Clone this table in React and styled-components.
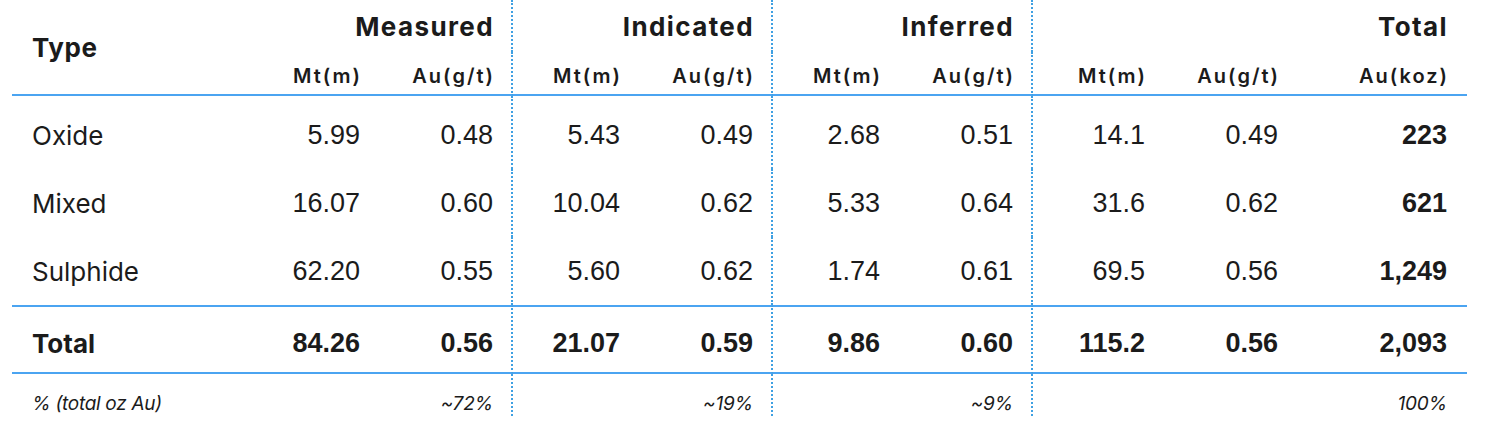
import React from 'react';
import styled, { createGlobalStyle } from 'styled-components';

const GlobalStyle = createGlobalStyle`
  body {
    margin: 0;
    background: #ffffff;
    color: #1b1b1b;
    font-family: "Inter", "Liberation Sans", sans-serif;
  }
`;

const BLUE = '#4ba4f1';
const DOTS = '#3fa0e2';

const Table = styled.table`
  margin-left: 12px;
  width: 1455px;
  table-layout: fixed;
  border-collapse: separate;
  border-spacing: 0;
`;

const Cell = styled.td`
  padding: 0 ${(p) => (p.$split ? '18px' : '20px')} 0 20px;
  text-align: ${(p) => (p.$left ? 'left' : 'right')};
  vertical-align: middle;
  white-space: nowrap;
  border-right: ${(p) => (p.$split ? `2px dotted ${DOTS}` : 'none')};
`;

const GroupHead = styled(Cell).attrs({ as: 'th' })`
  height: 52px;
  font-size: 26px;
  font-weight: 700;
  letter-spacing: 1.4px;
  padding-right: ${(p) => (p.$split ? '17px' : '19px')};
`;

const TypeHead = styled(GroupHead)`
  text-align: left;
  letter-spacing: 0.6px;
  border-bottom: 2px solid ${BLUE};
`;

const UnitHead = styled(Cell).attrs({ as: 'th' })`
  height: 44px;
  padding-top: 6px;
  padding-right: ${(p) => (p.$split ? '16px' : '18px')};
  box-sizing: border-box;
  font-size: 20px;
  font-weight: 600;
  letter-spacing: 2px;
  border-bottom: 2px solid ${BLUE};
`;

const BodyRow = styled.tr`
  td {
    height: 68px;
    box-sizing: border-box;
  }
  &:first-child td {
    height: 73px;
    padding-top: 5px;
  }
  &:last-child td {
    height: 65px;
    padding-top: 3px;
  }
`;

const Label = styled(Cell)`
  font-size: 26px;
  font-weight: ${(p) => (p.$bold ? 700 : 400)};
`;

const Num = styled(Cell)`
  font-family: "Liberation Sans", Arial, sans-serif;
  font-size: 27px;
  font-weight: ${(p) => (p.$bold ? 700 : 400)};
`;

const TotalRow = styled.tr`
  td {
    height: 69px;
    box-sizing: border-box;
    padding-top: 7px;
    border-top: 2px solid ${BLUE};
    border-bottom: 2px solid ${BLUE};
  }
`;

const NoteRow = styled.tr`
  td {
    height: 42px;
    box-sizing: border-box;
    padding-top: 18px;
    padding-bottom: 0;
    font-size: 19px;
    font-style: italic;
    line-height: 22px;
  }
`;

const Note = styled(Cell)`
  letter-spacing: ${(p) => (p.$left ? '-0.3px' : '-0.2px')};
`;

const widths = [241, 127, 133, 127, 133, 127, 133, 132, 133, 169];
const splits = [false, false, true, false, true, false, true, false, false, false];

const rows = [
  ['Oxide', '5.99', '0.48', '5.43', '0.49', '2.68', '0.51', '14.1', '0.49', '223'],
  ['Mixed', '16.07', '0.60', '10.04', '0.62', '5.33', '0.64', '31.6', '0.62', '621'],
  ['Sulphide', '62.20', '0.55', '5.60', '0.62', '1.74', '0.61', '69.5', '0.56', '1,249'],
];

const total = ['Total', '84.26', '0.56', '21.07', '0.59', '9.86', '0.60', '115.2', '0.56', '2,093'];
const note = ['% (total oz Au)', '', '~72%', '', '~19%', '', '~9%', '', '', '100%'];
const units = ['Mt(m)', 'Au(g/t)', 'Mt(m)', 'Au(g/t)', 'Mt(m)', 'Au(g/t)', 'Mt(m)', 'Au(g/t)', 'Au(koz)'];

export default function App() {
  return (
    <>
      <GlobalStyle />
      <Table>
        <colgroup>
          {widths.map((w, i) => (
            <col key={i} style={{ width: w }} />
          ))}
        </colgroup>
        <thead>
          <tr>
            <TypeHead rowSpan={2}>Type</TypeHead>
            <GroupHead colSpan={2} $split>Measured</GroupHead>
            <GroupHead colSpan={2} $split>Indicated</GroupHead>
            <GroupHead colSpan={2} $split>Inferred</GroupHead>
            <GroupHead colSpan={3}>Total</GroupHead>
          </tr>
          <tr>
            {units.map((u, i) => (
              <UnitHead key={i} $split={splits[i + 1]}>{u}</UnitHead>
            ))}
          </tr>
        </thead>
        <tbody>
          {rows.map((r) => (
            <BodyRow key={r[0]}>
              <Label $left>{r[0]}</Label>
              {r.slice(1).map((v, i) => (
                <Num key={i} $split={splits[i + 1]} $bold={i === 8}>{v}</Num>
              ))}
            </BodyRow>
          ))}
          <TotalRow>
            <Label $left $bold>{total[0]}</Label>
            {total.slice(1).map((v, i) => (
              <Num key={i} $split={splits[i + 1]} $bold>{v}</Num>
            ))}
          </TotalRow>
          <NoteRow>
            {note.map((v, i) => (
              <Note key={i} $left={i === 0} $split={splits[i]}>{v}</Note>
            ))}
          </NoteRow>
        </tbody>
      </Table>
    </>
  );
}
